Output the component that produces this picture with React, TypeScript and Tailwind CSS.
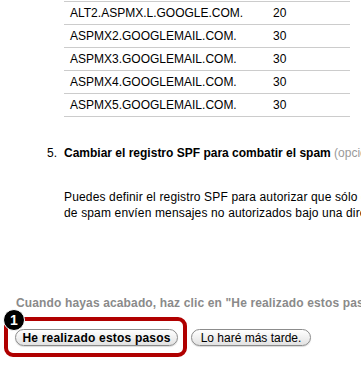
import React from "react";

const rows: [string, string][] = [
  ["ALT2.ASPMX.L.GOOGLE.COM.", "20"],
  ["ASPMX2.GOOGLEMAIL.COM.", "30"],
  ["ASPMX3.GOOGLEMAIL.COM.", "30"],
  ["ASPMX4.GOOGLEMAIL.COM.", "30"],
  ["ASPMX5.GOOGLEMAIL.COM.", "30"],
];

export default function App() {
  return (
    <div
      className="relative w-[361px] h-[373px] overflow-hidden bg-white text-black"
      style={{ fontFamily: '"Liberation Sans", Arial, sans-serif' }}
    >
      <div className="ml-[64px] mt-[1px] w-[286px] border-t border-[#cccccc]">
        {rows.map(([host, pri], i) => (
          <div
            key={i}
            className="flex h-[23px] items-center border-b border-[#cccccc] text-[12px] leading-none"
          >
            <div className="w-[209px] shrink-0 pl-[6px]">{host}</div>
            <div>{pri}</div>
          </div>
        ))}
      </div>

      <div className="mt-[29px] flex text-[12px] leading-[15px] whitespace-nowrap">
        <div className="w-[64px] shrink-0 pr-[7px] text-right">5.</div>
        <div className="shrink-0">
          <span className="font-bold">Cambiar el registro SPF para combatir el spam</span>{" "}
          <span className="text-[#999999]">(opcional)</span>
        </div>
      </div>

      <div className="ml-[64px] mt-[28px] text-[12px] leading-[16px] tracking-[0.15px] whitespace-nowrap">
        <div>Puedes definir el registro SPF para autorizar que sólo determinados servidores</div>
        <div>de spam envíen mensajes no autorizados bajo una dirección de tu dominio.</div>
      </div>

      <div className="ml-[16px] mt-[75px] text-[12px] font-bold leading-[15px] tracking-[0.14px] text-[#8a8a8a] whitespace-nowrap">
        Cuando hayas acabado, haz clic en "He realizado estos pasos".
      </div>

      <div className="relative ml-[15px] mt-[18px] flex gap-[13px]">
        <button className="h-[17px] w-[163px] shrink-0 rounded-full border border-[#8c8c8c] bg-gradient-to-b from-white to-[#e2e2e2] text-[12px] font-bold leading-none tracking-[0.2px] text-black shadow-[0_1px_1px_rgba(0,0,0,0.15)]">
          He realizado estos pasos
        </button>
        <button className="h-[17px] w-[120px] shrink-0 rounded-full border border-[#8c8c8c] bg-gradient-to-b from-white to-[#e2e2e2] text-[12px] leading-none text-black shadow-[0_1px_1px_rgba(0,0,0,0.15)]">
          Lo haré más tarde.
        </button>

        <div className="pointer-events-none absolute left-[-11px] top-[-12px] h-[40px] w-[183px] rounded-[9px] border-[4px] border-[#b00000]" />
        <div className="pointer-events-none absolute left-[-12px] top-[-20px] flex h-[22px] w-[22px] items-center justify-center rounded-full border border-white bg-black text-[14px] font-bold text-white">
          1
        </div>
      </div>
    </div>
  );
}
